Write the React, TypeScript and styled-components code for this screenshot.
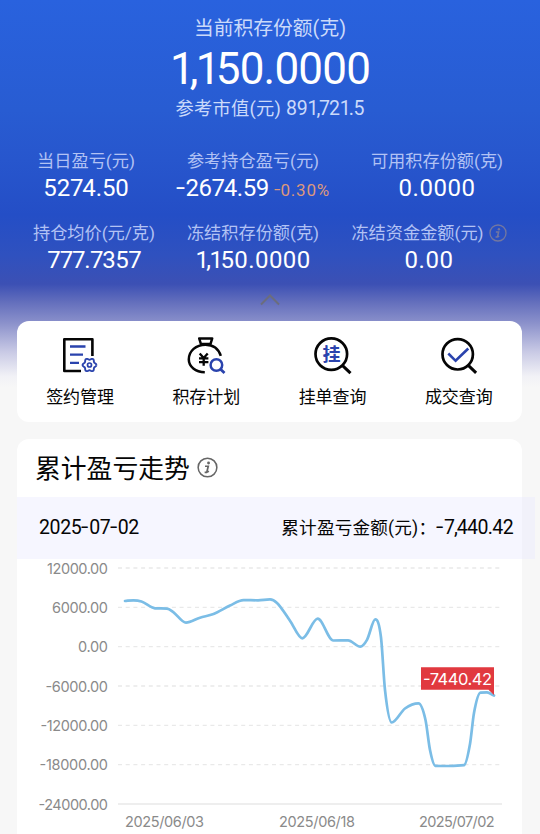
import React from 'react';
import styled, { createGlobalStyle } from 'styled-components';

const GlobalStyle = createGlobalStyle`
  *, *::before, *::after { box-sizing: border-box; }
  body {
    margin: 0;
    background: #f7f7f7;
    font-family: Roboto, "Noto Sans CJK SC", sans-serif;
    color: #050505;
    overflow: hidden;
  }
`;

const Page = styled.main`
  width: 540px;
  height: 834px;
  overflow: hidden;
  background: linear-gradient(
    180deg,
    #2962de 0,
    #285cd2 110px,
    #2756cd 160px,
    #244ec6 215px,
    #2f51bf 255px,
    #3c50b4 284px,
    #6570bd 303px,
    #8b91cb 323px,
    #c9cae5 352px,
    #f1f1f6 376px,
    #f7f7f7 388px
  );
`;

const Label = styled.span<{ $size: number; $color?: string; $spacing?: number; $height?: number }>`
  display: block;
  font-size: ${(p) => p.$size}px;
  line-height: ${(p) => p.$height ?? 24}px;
  letter-spacing: ${(p) => p.$spacing ?? 0}px;
  color: ${(p) => p.$color ?? '#b2c2f4'};
  white-space: nowrap;
`;

const Narrow = styled.span<{ $pull: number }>`
  letter-spacing: -${(p) => p.$pull}em;
`;

const Minus = styled.span`
  display: inline-block;
  width: 0.4em;
  line-height: 1;
  transform: translateY(-0.05em) scaleX(1.35);
  transform-origin: 0 50%;
`;

const pulls: Record<string, number> = { '1': 0.11, ',': 0.06, '7': 0.05 };

const Num = ({ children }: { children: string }) => (
  <>
    {[...children].map((ch, i) => {
      if (ch === '-') return <Minus key={i}>-</Minus>;
      return pulls[ch] ? <Narrow key={i} $pull={pulls[ch]}>{ch}</Narrow> : ch;
    })}
  </>
);

const Summary = styled.header`
  display: flex;
  flex-direction: column;
  align-items: center;
  height: 149px;
  padding-top: 17px;
`;

const MarketValue = styled.div`
  display: flex;
  gap: 5px;
`;

const Metrics = styled.section`
  display: flex;
  justify-content: center;
  height: 72px;
`;

const Metric = styled.div<{ $width: number }>`
  display: flex;
  flex-direction: column;
  align-items: center;
  width: ${(p) => p.$width}px;
`;

const MetricLine = styled.div`
  display: flex;
  align-items: center;
  justify-content: center;
  gap: 5px;
`;

const Rate = styled(Label)`
  padding-top: 3px;
`;

const Collapse = styled.div`
  display: flex;
  justify-content: center;
  height: 28px;
  svg { display: block; }
`;

const Card = styled.section`
  width: 505px;
  margin-left: 17px;
  border-radius: 12px;
  background: #fff;
`;

const Actions = styled(Card)`
  display: flex;
  height: 101px;
  margin-bottom: 17px;
`;

const Action = styled.div`
  display: flex;
  flex: 1;
  flex-direction: column;
  align-items: center;
  padding-top: 14px;
  svg { display: block; margin-bottom: 10px; }
`;

const Trend = styled(Card)`
  height: 410px;
`;

const TrendHead = styled.div`
  display: flex;
  align-items: center;
  gap: 7px;
  height: 58px;
  padding: 1px 0 0 18px;
  svg { margin-top: -2px; }
`;

const DateBar = styled.div`
  display: flex;
  align-items: center;
  justify-content: space-between;
  width: 518px;
  height: 62px;
  padding: 0 22px;
  background: rgba(232, 232, 255, 0.4);
`;

const BarAmount = styled.div`
  display: flex;
`;

const Info = ({ size, color }: { size: number; color: string }) => (
  <svg width={size} height={size} viewBox="0 0 22 22" fill="none" stroke={color}>
    <circle cx="11" cy="11" r="9.8" strokeWidth="1.6" />
    <circle cx="12.1" cy="6.3" r="1.5" fill={color} stroke="none" />
    <path d="M8.4 9.7h3.4l-1.4 5.6q-.2 1.1 2-.5M8 16h2.6" strokeWidth="1.8" />
  </svg>
);

const gear = Array.from({ length: 73 }, (_, i) => {
  const a = (i * Math.PI) / 36;
  const r = 6.1 + 0.8 * Math.cos(6 * a);
  return `${i ? 'L' : 'M'}${(89.5 + r * Math.cos(a)).toFixed(2)} ${(365 + r * Math.sin(a)).toFixed(2)}`;
}).join('');

const ContractIcon = () => (
  <svg width="40" height="40" viewBox="60 335 40 40" fill="none" stroke="#050505" strokeWidth="2.6">
    <path d="M81 371H64.3V339.3H92.4V356" strokeLinejoin="round" />
    <g stroke="#2a43ad">
      <path d="M70 346.5h15.5M70 354.7h13M70 362.8h9" strokeWidth="2.3" />
      <path d={gear} strokeWidth="1.9" />
      <circle cx="89.5" cy="365" r="2" strokeWidth="1.7" />
    </g>
  </svg>
);

const PlanIcon = () => (
  <svg width="40" height="40" viewBox="186 335 40 40" fill="none" stroke="#050505" strokeWidth="2.5">
    <path d="M199.2 338.4h13l-1.7 5.6h-9.6z" strokeLinejoin="round" />
    <path d="M204.8 372.3C195.5 372 188.8 366.5 188.8 359.5C188.8 351 196 344.7 205.5 344.7C213 344.7 218.5 348.7 220.8 355.8" />
    <path d="M199.7 353.5l4 4.6 4-4.6M199 358.4h9.4M199 362.2h9.4M203.7 358v7.8" strokeWidth="2.3" />
    <g stroke="#2a43ad">
      <circle cx="216.4" cy="365" r="5.8" strokeWidth="2.5" />
      <path d="M220.3 369l4.2 4" strokeWidth="2.8" />
    </g>
  </svg>
);

const HangText = styled.text`
  font: 700 18px "Noto Sans CJK SC", sans-serif;
  fill: #2a43ad;
`;

const OrderIcon = () => (
  <svg width="40" height="40" viewBox="313 335 40 40" fill="none" stroke="#050505" strokeWidth="2.7">
    <circle cx="331.3" cy="354.1" r="15.8" />
    <path d="M342.3 365.3l8.2 7.8" strokeWidth="3" />
    <HangText x="331.6" y="360.7" textAnchor="middle" stroke="none">挂</HangText>
  </svg>
);

const DealIcon = () => (
  <svg width="40" height="40" viewBox="439 335 40 40" fill="none" stroke="#050505" strokeWidth="2.7">
    <circle cx="457.7" cy="354.3" r="15.2" />
    <path d="M468.3 365.4l7.8 7.4" strokeWidth="3" />
    <path d="M448.3 353.5l7.3 7.3 12.7-12.3" stroke="#2a43ad" strokeWidth="2.6" />
  </svg>
);

const ChartSvg = styled.svg`
  display: block;
  font-family: Inter, sans-serif;
  font-size: 14.5px;
  fill: #8a8a8a;
`;

const ticks = [
  { text: '12000.00', y: 568, width: 61 },
  { text: '6000.00', y: 607.3, width: 56 },
  { text: '0.00', y: 646.6, width: 30 },
  { text: '-6000.00', y: 686, width: 62.5 },
  { text: '-12000.00', y: 725.3, width: 67.5 },
  { text: '-18000.00', y: 764.6, width: 68.5 },
  { text: '-24000.00', y: 804, width: 69.5 },
];

const dates = [
  { text: '2025/06/03', x: 125, width: 79 },
  { text: '2025/06/18', x: 279, width: 76 },
  { text: '2025/07/02', x: 419, width: 75.5 },
];

const points: [number, number][] = [
  [125, 601], [133.5, 600.3], [141.5, 601.5], [155, 608.3], [167, 608.6], [173, 611.8],
  [186, 622.6], [200, 617.7], [213.5, 614], [230, 605.5], [243.5, 600.1], [258, 600.3],
  [270, 599.4], [277, 602.9], [290, 620.7], [302.3, 638.3], [317.7, 618.7], [333.3, 640.5],
  [348, 640.3], [360.3, 646.6], [367, 639.8], [375.3, 619.3], [381, 637.5], [385, 690],
  [391.7, 722.5], [405, 708.5], [418.5, 703.4], [425.5, 720], [430, 750], [435.3, 765.8],
  [449, 766], [464, 765.2], [470, 744], [474, 713], [480.5, 692.7], [487, 692.4], [494, 695.5],
];

// Monotone cubic interpolation: flat at local extremes, no overshoot.
const smooth = (pts: [number, number][]) => {
  const slope = pts.slice(1).map((p, i) => (p[1] - pts[i][1]) / (p[0] - pts[i][0]));
  const tangent = pts.map((_, i) => {
    const a = slope[i - 1] ?? slope[i];
    const b = slope[i] ?? slope[i - 1];
    if (a * b <= 0) return 0;
    return Math.sign(a) * Math.min(Math.abs(a + b) / 2, 2.6 * Math.abs(a), 2.6 * Math.abs(b));
  });
  return pts.slice(1).reduce((d, p, i) => {
    const b = pts[i];
    const h = (p[0] - b[0]) / 3;
    return `${d}C${b[0] + h} ${b[1] + tangent[i] * h} ${p[0] - h} ${p[1] - tangent[i + 1] * h} ${p[0]} ${p[1]}`;
  }, `M${pts[0][0]} ${pts[0][1]}`);
};

const Chart = () => (
  <ChartSvg width="505" height="275" viewBox="17 559 505 275">
    {ticks.map((t, i) => (
      <g key={t.text}>
        <path
          d={`M118 ${t.y}H502`}
          stroke={i === 6 ? '#eee' : '#e9e9e9'}
          strokeWidth={i === 6 ? 2 : 1.3}
          strokeDasharray={i === 6 ? undefined : '4 3.7'}
        />
        <text x={108 - t.width} y={t.y + 5.5} textLength={t.width}>{t.text}</text>
      </g>
    ))}
    {dates.map((d) => (
      <text key={d.text} x={d.x} y="827.3" textLength={d.width}>{d.text}</text>
    ))}
    <path d={smooth(points)} fill="none" stroke="#7bbde6" strokeWidth="2.7" strokeLinecap="round" strokeLinejoin="round" />
    <path d="M421 667.3H494V695L488.5 689.7H421Z" fill="#e1393f" />
    <text x="423" y="685" fontSize="16.5" fill="#fff" textLength="69">-7440.42</text>
  </ChartSvg>
);

const actions = [
  { label: '签约管理', Icon: ContractIcon },
  { label: '积存计划', Icon: PlanIcon },
  { label: '挂单查询', Icon: OrderIcon },
  { label: '成交查询', Icon: DealIcon },
];

const Value = ({ children, spacing = 0 }: { children: string; spacing?: number }) => (
  <Label $size={24} $height={30} $color="#fff" $spacing={spacing}><Num>{children}</Num></Label>
);

const Caption = ({ children }: { children: string }) => (
  <Label $size={17.2}>{children}</Label>
);

export default function App() {
  return (
    <>
      <GlobalStyle />
      <Page>
        <Summary>
          <Label $size={19.8} $color="#cbdafa">当前积存份额(克)</Label>
          <Label $size={44} $height={56} $color="#fff" $spacing={-0.8}><Num>1,150.0000</Num></Label>
          <MarketValue>
            <Label $size={18.3} $color="#cbdafa" $spacing={0.2}>参考市值(元)</Label>
            <Label $size={19.5} $color="#cbdafa" $spacing={-0.2}><Num>891,721.5</Num></Label>
          </MarketValue>
        </Summary>
        <Metrics>
          <Metric $width={135}>
            <Caption>当日盈亏(元)</Caption>
            <Value spacing={-0.1}>5274.50</Value>
          </Metric>
          <Metric $width={199}>
            <Caption>参考持仓盈亏(元)</Caption>
            <MetricLine>
              <Value spacing={-0.5}>-2674.59</Value>
              <Rate $size={17} $color="#dc987d" $spacing={0.8}><Num>-0.30%</Num></Rate>
            </MetricLine>
          </Metric>
          <Metric $width={169}>
            <Caption>可用积存份额(克)</Caption>
            <Value spacing={0.5}>0.0000</Value>
          </Metric>
        </Metrics>
        <Metrics>
          <Metric $width={153}>
            <Caption>持仓均价(元/克)</Caption>
            <Value spacing={-0.5}>777.7357</Value>
          </Metric>
          <Metric $width={165}>
            <Caption>冻结积存份额(克)</Caption>
            <Value spacing={0.4}>1,150.0000</Value>
          </Metric>
          <Metric $width={187}>
            <MetricLine>
              <Caption>冻结资金金额(元)</Caption>
              <Info size={18} color="#7377a0" />
            </MetricLine>
            <Value spacing={0.5}>0.00</Value>
          </Metric>
        </Metrics>
        <Collapse>
          <svg width="20" height="13" viewBox="0 0 20 13" fill="none">
            <path d="M1 11.5L10 2.5L19 11.5" stroke="#6b6d7d" strokeWidth="2" />
          </svg>
        </Collapse>
        <Actions>
          {actions.map(({ label, Icon }) => (
            <Action key={label}>
              <Icon />
              <Label $size={17} $color="#050505">{label}</Label>
            </Action>
          ))}
        </Actions>
        <Trend>
          <TrendHead>
            <Label $size={25.8} $height={34} $color="#050505">累计盈亏走势</Label>
            <Info size={21} color="#666" />
          </TrendHead>
          <DateBar>
            <Label $size={19.5} $color="#050505" $spacing={-0.35}><Num>2025-07-02</Num></Label>
            <BarAmount>
              <Label $size={17.6} $color="#050505" $spacing={0.2}>累计盈亏金额(元)：</Label>
              <Label $size={19.5} $color="#050505" $spacing={-0.6}><Num>-7,440.42</Num></Label>
            </BarAmount>
          </DateBar>
          <Chart />
        </Trend>
      </Page>
    </>
  );
}
